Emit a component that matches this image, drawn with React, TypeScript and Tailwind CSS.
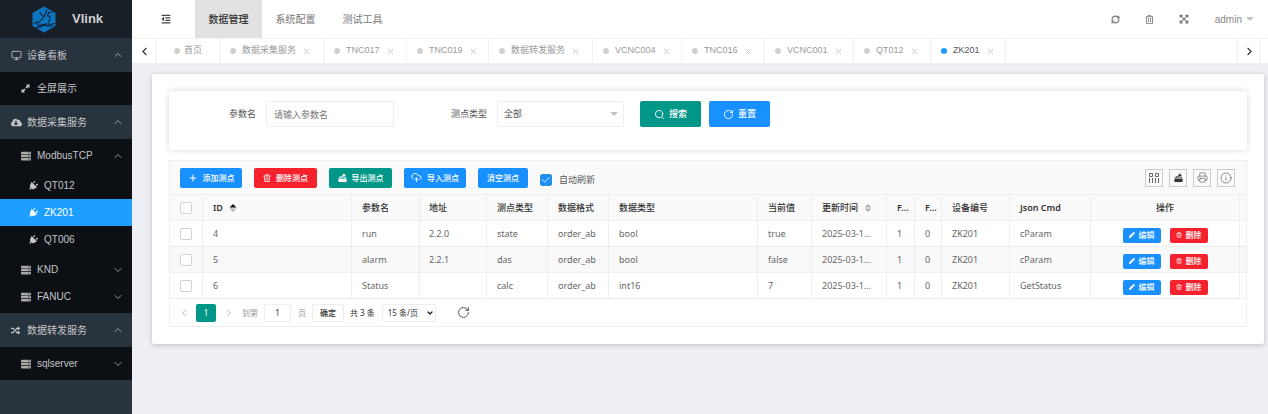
import React from 'react';
import clsx from 'clsx';
import {
  FaCloudDownloadAlt,
  FaExpandArrowsAlt,
  FaOutdent,
  FaPen,
  FaPlug,
  FaRandom,
  FaRegTrashAlt,
  FaServer,
} from 'react-icons/fa';
import {
  Check,
  ChevronDown,
  ChevronLeft,
  ChevronRight,
  ChevronUp,
  CloudUpload,
  Info,
  Monitor,
  Plus,
  Printer,
  RefreshCw,
  RotateCw,
  Search,
  X,
} from 'lucide-react';

const topMenus = ['数据管理', '系统配置', '测试工具'];

const tabs = [
  { label: '首页', width: 'w-[63px]', home: true },
  { label: '数据采集服务', width: 'w-[104px]' },
  { label: 'TNC017', width: 'w-[83px]' },
  { label: 'TNC019', width: 'w-[82px]' },
  { label: '数据转发服务', width: 'w-[104px]' },
  { label: 'VCNC004', width: 'w-[89px]' },
  { label: 'TNC016', width: 'w-[83px]' },
  { label: 'VCNC001', width: 'w-[89px]' },
  { label: 'QT012', width: 'w-[77px]' },
  { label: 'ZK201', width: 'w-[75px]', active: true },
];

const points = [
  { id: 4, name: 'run', address: '2.2.0', kind: 'state', format: 'order_ab', type: 'bool', value: 'true', cmd: 'cParam' },
  { id: 5, name: 'alarm', address: '2.2.1', kind: 'das', format: 'order_ab', type: 'bool', value: 'false', cmd: 'cParam' },
  { id: 6, name: 'Status', address: '', kind: 'calc', format: 'order_ab', type: 'int16', value: '7', cmd: 'GetStatus' },
];

// columns without a width share whatever room is left
const columnWidths = [
  'w-[33px]', '', 'w-[67px]', 'w-[68px]', 'w-[61px]', 'w-[61px]', '', 'w-[54px]',
  'w-[75px]', 'w-[28px]', 'w-[27px]', 'w-[68px]', 'w-[81px]', '', 'w-[6px]',
];

const cell = 'h-[26px] truncate border-r border-b border-[#eeeeee] px-[10px] text-left';
const narrowHead = 'h-[26px] overflow-hidden border-r border-b border-[#eeeeee] pl-[10px] text-left font-semibold';
const pinned = 'relative border-r-[#f2f2f2] shadow-[0_0_5px_rgba(0,0,0,0.08)] [clip-path:inset(0_-6px_0_0)]';

const Logo = () => (
  <svg viewBox="0 0 24 27" className="h-[27px] w-6" fill="none">
    <path d="M12 0.5 23.5 7v13L12 26.5.5 20V7z" fill="#0d76c2" />
    <g stroke="#132536" strokeWidth="1.2" strokeLinecap="round">
      <path d="M8 5.5c.5 3 1.600 4.500 3.500 4.500M14.500 4c-1 5-3.500 9-7.500 12" />
      <path d="M20 6.500h-3.500l-1 3.500c3-.5 3.500 3 1 5.500" />
      <path d="M2 17.500c2-1.500 4-2 4-.5s-1 2 .5 2.500 5-1.500 8-1.500 4 1 8-.500" />
      <path d="M4 21.500c3 1 6-2.500 9.500-2 2.500.5 4 1 7 0" />
    </g>
  </svg>
);

const ExportIcon = ({ className }: { className?: string }) => (
  <svg viewBox="0 0 12 12" className={className} fill="currentColor">
    <path d="M0.500 7.200h11v3.800a1 1 0 0 1-1 1h-9a1 1 0 0 1-1-1z" />
    <path d="M1 6.400 2.800 4.200h1.600v2.200zM11 6.400 9.800 5H7.600v1.400z" />
    <path d="M4.800 6.800c-.2-2.800.6-4.300 2.200-4.600V.4L10.500 3 7 5.200V4.100c-.8.2-1 1-.8 2.700z" />
  </svg>
);

const BinIcon = ({ className }: { className?: string }) => (
  <svg viewBox="0 0 10 10" className={className} fill="none" stroke="currentColor">
    <path d="M.5 2.500h9M3.200 2.200V.8h3.600v1.400M1.700 2.800l.5 6.600h5.600l.5-6.600M4 4.200v3.600M6 4.200v3.600" />
  </svg>
);

const DiagonalIcon = () => (
  <svg viewBox="0 0 10 10" className="size-[9px]" fill="currentColor">
    <path d="M5.500 0.500h4v4L8.200 3.200 6.400 5 5 3.600l1.800-1.800zM4.500 9.500h-4v-4l1.300 1.300L3.600 5 5 6.400 3.200 8.200z" />
  </svg>
);

const ColumnsIcon = () => (
  <svg viewBox="0 0 12 12" className="size-3" fill="none" stroke="#666" strokeWidth="1">
    <path d="M1.500 1.500h3v3h-3zM7.500 1.500h3v3h-3zM1.500 6v5M4.500 6v5M7.500 6v5M10.500 6v5" />
  </svg>
);

const SortIcon = ({ asc }: { asc?: boolean }) => (
  <svg viewBox="0 0 8 8" className="size-2">
    <path d="M4 0 7.500 3.400h-7z" fill={asc ? '#111' : '#b2b2b2'} />
    <path d="M4 8 .5 4.600h7z" fill="#b2b2b2" />
  </svg>
);

const Caret = ({ className }: { className?: string }) => (
  <svg viewBox="0 0 8 4" className={clsx('h-1 w-2', className)} fill="#c2c2c2">
    <path d="M0 0h8L4 4z" />
  </svg>
);

const SideGroup = ({ icon, label, children }: { icon: React.ReactNode; label: string; children: React.ReactNode }) => (
  <li>
    <a href="#" className="flex h-[34px] items-center bg-[#28333e] pr-2 pl-[11px]">
      <span className="flex w-4 items-center">{icon}</span>
      <span className="flex-1">{label}</span>
      <ChevronUp size={12} strokeWidth={1.500} />
    </a>
    <ul className="bg-[#0c1014] py-[3px]">{children}</ul>
  </li>
);

const SideItem = ({ icon, label, chevron }: { icon?: React.ReactNode; label: string; chevron?: 'up' | 'down' }) => (
  <a href="#" className="flex h-[27px] items-center pr-2 pl-[21px]">
    <span className="flex w-4 items-center">{icon || <FaServer size={10} className="text-[#aaa]" />}</span>
    <span className="flex-1">{label}</span>
    {chevron === 'up' && <ChevronUp size={12} strokeWidth={1.500} />}
    {chevron === 'down' && <ChevronDown size={12} strokeWidth={1.500} />}
  </a>
);

const Sidebar = () => (
  <aside className="w-[132px] shrink-0 bg-[#28333e] text-[10px] text-[#c3c5c8]">
    <div className="flex h-[38px] items-center gap-4 bg-[#191f26] pl-8 text-[13px] font-bold text-[#cfd1d4]">
      <Logo />
      Vlink
    </div>
    <nav>
      <ul>
        <SideGroup icon={<Monitor size={11} strokeWidth={1.800} />} label="设备看板">
          <li>
            <SideItem icon={<DiagonalIcon />} label="全屏展示" />
          </li>
        </SideGroup>
        <SideGroup icon={<FaCloudDownloadAlt size={11} />} label="数据采集服务">
          <li>
            <SideItem label="ModbusTCP" chevron="up" />
            <ul className="py-[3px]">
              {['QT012', 'ZK201', 'QT006'].map((name) => (
                <li key={name}>
                  <a
                    href="#"
                    className={clsx('flex h-[27px] items-center pl-7', name === 'ZK201' && 'bg-[#1e9fff] text-white')}
                  >
                    <FaPlug size={10} className="mr-[6px] rotate-45" />
                    {name}
                  </a>
                </li>
              ))}
            </ul>
          </li>
          <li><SideItem label="KND" chevron="down" /></li>
          <li><SideItem label="FANUC" chevron="down" /></li>
        </SideGroup>
        <SideGroup icon={<FaRandom size={9} />} label="数据转发服务">
          <li><SideItem label="sqlserver" chevron="down" /></li>
        </SideGroup>
      </ul>
    </nav>
  </aside>
);

const Header = () => (
  <header className="flex h-[38px] items-center bg-white text-[10px] text-[#777]">
    <button aria-label="折叠菜单" className="flex w-[63px] justify-center pl-1 text-[#444]">
      <FaOutdent size={10} />
    </button>
    <nav className="flex h-full flex-1">
      {topMenus.map((menu, i) => (
        <a
          key={menu}
          href="#"
          className={clsx('flex w-[67px] items-center justify-center', i === 0 && 'bg-[#e2e2e2] font-medium text-[#333]')}
        >
          {menu}
        </a>
      ))}
    </nav>
    <div className="flex items-center pr-[14px] text-[#777]">
      <button aria-label="刷新" className="flex w-[34px] justify-center"><RefreshCw size={9} strokeWidth={3} /></button>
      <button aria-label="清理缓存" className="flex w-[34px] justify-center"><FaRegTrashAlt size={9} /></button>
      <button aria-label="全屏" className="flex w-[34px] justify-center"><FaExpandArrowsAlt size={10} /></button>
      <button className="ml-[14px] flex items-center gap-1 text-[#888]">
        admin
        <Caret />
      </button>
    </div>
  </header>
);

const TabBar = () => (
  <div className="flex h-[25px] border-t border-[#f2f2f2] bg-white text-[9px] text-[#999]">
    <button aria-label="向左" className="flex w-[25px] items-center justify-center border-r border-[#f2f2f2] text-[#333]">
      <ChevronLeft size={13} />
    </button>
    <div className="flex flex-1 overflow-hidden">
      {tabs.map((tab) => (
        <div
          key={tab.label}
          className={clsx(
            'flex shrink-0 items-center border-r border-[#f2f2f2]',
            tab.width,
            tab.home ? 'justify-center gap-1' : 'gap-[6px] pl-[10px]',
          )}
        >
          <span className={clsx('size-[6px] rounded-full', tab.active ? 'bg-[#1e9fff]' : 'bg-[#d0d0d0]')} />
          <a href="#" className={clsx(tab.active && 'text-[#555]')}>{tab.label}</a>
          {!tab.home && (
            <button aria-label={`关闭 ${tab.label}`} className="text-[#bbb]"><X size={9} strokeWidth={2} /></button>
          )}
        </div>
      ))}
    </div>
    <button aria-label="向右" className="mr-[7px] flex w-6 items-center justify-center border-x border-[#f2f2f2] text-[#333]">
      <ChevronRight size={13} />
    </button>
  </div>
);

const SearchForm = () => (
  <form className="flex h-[59px] items-start rounded-sm bg-white pt-[10px] text-[#555] shadow-[0_0_6px_rgba(0,0,0,0.16)]">
    <label htmlFor="name" className="w-[97px] pr-[10px] text-right leading-[25px]">参数名</label>
    <input
      id="name"
      placeholder="请输入参数名"
      className="h-[26px] w-32 rounded-xs border border-[#eee] px-[7px] placeholder:text-[#757575]"
    />
    <label htmlFor="kind" className="w-[103px] pr-[10px] text-right leading-[25px]">测点类型</label>
    <div className="relative">
      <select id="kind" className="h-[26px] w-[127px] appearance-none rounded-xs border border-[#eee] px-[6px]">
        <option>全部</option>
      </select>
      <Caret className="absolute top-[11px] right-[6px]" />
    </div>
    <button type="button" className="ml-4 flex h-[26px] w-[61px] items-center justify-center gap-1 rounded-xs bg-[#009688] font-medium text-white">
      <Search size={11} />
      搜索
    </button>
    <button type="button" className="ml-2 flex h-[26px] w-[61px] items-center justify-center gap-1 rounded-xs bg-[#1890ff] font-medium text-white">
      <RotateCw size={11} />
      重置
    </button>
  </form>
);

const toolButton = 'flex h-5 items-center justify-center gap-[5px] rounded-xs text-[8px] font-medium text-white';
const iconButton = 'flex size-[18px] items-center justify-center border border-[#ccc] text-[#666]';

const Toolbar = () => (
  <div className="flex h-[34px] items-center gap-3 border-b border-[#eee] bg-[#fafafa] pr-[11px] pl-[10px]">
    <button className={clsx(toolButton, 'w-[62px] bg-[#1890ff]')}><Plus size={10} strokeWidth={2.500} />添加测点</button>
    <button className={clsx(toolButton, 'w-[63px] bg-[#f5222d]')}><BinIcon className="size-2" />删除测点</button>
    <button className={clsx(toolButton, 'w-[63px] bg-[#009688]')}><ExportIcon className="size-[9px]" />导出测点</button>
    <button className={clsx(toolButton, 'w-[62px] bg-[#1890ff]')}><CloudUpload size={11} />导入测点</button>
    <button className={clsx(toolButton, 'w-[50px] bg-[#1890ff]')}>清空测点</button>
    <label className="flex items-center gap-[7px] pt-[5px] text-[#555]">
      <span className="relative flex">
        <input type="checkbox" defaultChecked className="size-3 appearance-none rounded-xs border border-[#3a92b8] bg-[#1890ff]" />
        <Check size={10} className="pointer-events-none absolute top-px left-px text-white" />
      </span>
      自动刷新
    </label>
    <div className="ml-auto flex gap-[6px]">
      <button aria-label="筛选列" className={iconButton}><ColumnsIcon /></button>
      <button aria-label="导出" className={iconButton}><ExportIcon className="size-[9px] text-[#333]" /></button>
      <button aria-label="打印" className={iconButton}><Printer size={11} strokeWidth={1.500} /></button>
      <button aria-label="提示" className={iconButton}><Info size={12} strokeWidth={1.500} /></button>
    </div>
  </div>
);

const RowCheckbox = ({ label }: { label: string }) => (
  <input type="checkbox" aria-label={label} className="block size-3 appearance-none rounded-xs border border-[#d2d2d2] bg-white" />
);

const rowButton = 'flex h-[15px] w-[38px] items-center justify-center gap-1 rounded-xs text-[8px] font-medium text-white';

const PointTable = () => (
  <table className="w-full table-fixed border-separate border-spacing-0 text-[#666]">
    <colgroup>
      {columnWidths.map((width, i) => (
        <col key={i} className={width} />
      ))}
    </colgroup>
    <thead className="bg-[#fafafa] text-[#333]">
      <tr>
        <th className={cell}><RowCheckbox label="全选" /></th>
        <th className={clsx(cell, 'font-semibold')}><span className="flex items-center gap-[6px]">ID <SortIcon asc /></span></th>
        <th className={clsx(cell, pinned, 'font-medium')}>参数名</th>
        <th className={clsx(cell, 'font-medium')}>地址</th>
        <th className={clsx(cell, 'font-medium')}>测点类型</th>
        <th className={clsx(cell, 'font-medium')}>数据格式</th>
        <th className={clsx(cell, 'font-medium')}>数据类型</th>
        <th className={clsx(cell, 'font-medium')}>当前值</th>
        <th className={clsx(cell, 'font-medium')}><span className="flex items-center gap-[6px]">更新时间 <SortIcon /></span></th>
        <th className={narrowHead}>F...</th>
        <th className={narrowHead}>F...</th>
        <th className={clsx(cell, 'font-medium')}>设备编号</th>
        <th className={clsx(cell, 'font-semibold')}>Json Cmd</th>
        <th className="h-[26px] border-r border-b border-[#eee] text-center font-medium">操作</th>
        <th className="border-b border-[#eee]" />
      </tr>
    </thead>
    <tbody>
      {points.map((point, i) => (
        <tr key={point.id} className={i % 2 ? 'bg-[#f9f9f9]' : 'bg-white'}>
          <td className={cell}><RowCheckbox label={`选择 ${point.id}`} /></td>
          <td className={cell}>{point.id}</td>
          <td className={clsx(cell, pinned)}>{point.name}</td>
          <td className={cell}>{point.address}</td>
          <td className={cell}>{point.kind}</td>
          <td className={cell}>{point.format}</td>
          <td className={cell}>{point.type}</td>
          <td className={cell}>{point.value}</td>
          <td className={cell}>2025-03-1...</td>
          <td className={cell}>1</td>
          <td className={cell}>0</td>
          <td className={cell}>ZK201</td>
          <td className={cell}>{point.cmd}</td>
          <td className="h-[26px] border-r border-b border-[#eee] pt-[3px]">
            <div className="flex justify-center gap-[9px]">
              <button className={clsx(rowButton, 'bg-[#1890ff]')}><FaPen size={6} />编辑</button>
              <button className={clsx(rowButton, 'bg-[#f5222d]')}><BinIcon className="size-[6px]" />删除</button>
            </div>
          </td>
          <td className="border-b border-[#eee]" />
        </tr>
      ))}
    </tbody>
  </table>
);

const Pagination = () => (
  <div className="flex h-[27px] items-center pl-2 text-[8px] text-[#333]">
    <button aria-label="上一页" className="mr-[6px] text-[#bbb]"><ChevronLeft size={12} strokeWidth={2} /></button>
    <button className="h-[18px] w-5 rounded-xs bg-[#009688] text-white">1</button>
    <button aria-label="下一页" className="ml-[7px] text-[#bbb]"><ChevronRight size={12} strokeWidth={2} /></button>
    <label htmlFor="page" className="ml-[7px] text-[#999]">到第</label>
    <input id="page" defaultValue="1" className="ml-[6px] h-[18px] w-[27px] rounded-xs border border-[#eee] text-center" />
    <span className="ml-[7px] text-[#999]">页</span>
    <button className="ml-[6px] h-[18px] w-8 rounded-xs border border-[#eee] font-medium">确定</button>
    <span className="ml-[6px]">共 3 条</span>
    <span className="relative ml-[7px]">
      <select aria-label="每页条数" className="block h-[18px] w-[54px] appearance-none rounded-xs border border-[#eee] pl-[5px]">
        <option>15 条/页</option>
      </select>
      <ChevronDown size={8} strokeWidth={4} className="pointer-events-none absolute top-[5px] right-[2px] text-[#222]" />
    </span>
    <button aria-label="刷新表格" className="ml-[21px] text-[#555]"><RotateCw size={13} strokeWidth={1.800} /></button>
  </div>
);

export default function App() {
  return (
    <div className="flex min-h-screen bg-[#eeeff4] font-['Liberation_Sans','Noto_Sans_CJK_SC',sans-serif]">
      <Sidebar />
      <div className="min-w-0 flex-1">
        <Header />
        <TabBar />
        <main className="pt-[11px] pr-1 pl-5 font-['Noto_Sans','Noto_Sans_CJK_SC',sans-serif] text-[9px]">
          <section className="rounded-xs bg-white p-[17px] shadow-[0_1px_5px_rgba(0,0,0,0.2)]">
            <SearchForm />
            <div className="mt-[10px] border border-[#eee]">
              <Toolbar />
              <PointTable />
              <Pagination />
            </div>
          </section>
        </main>
      </div>
    </div>
  );
}
